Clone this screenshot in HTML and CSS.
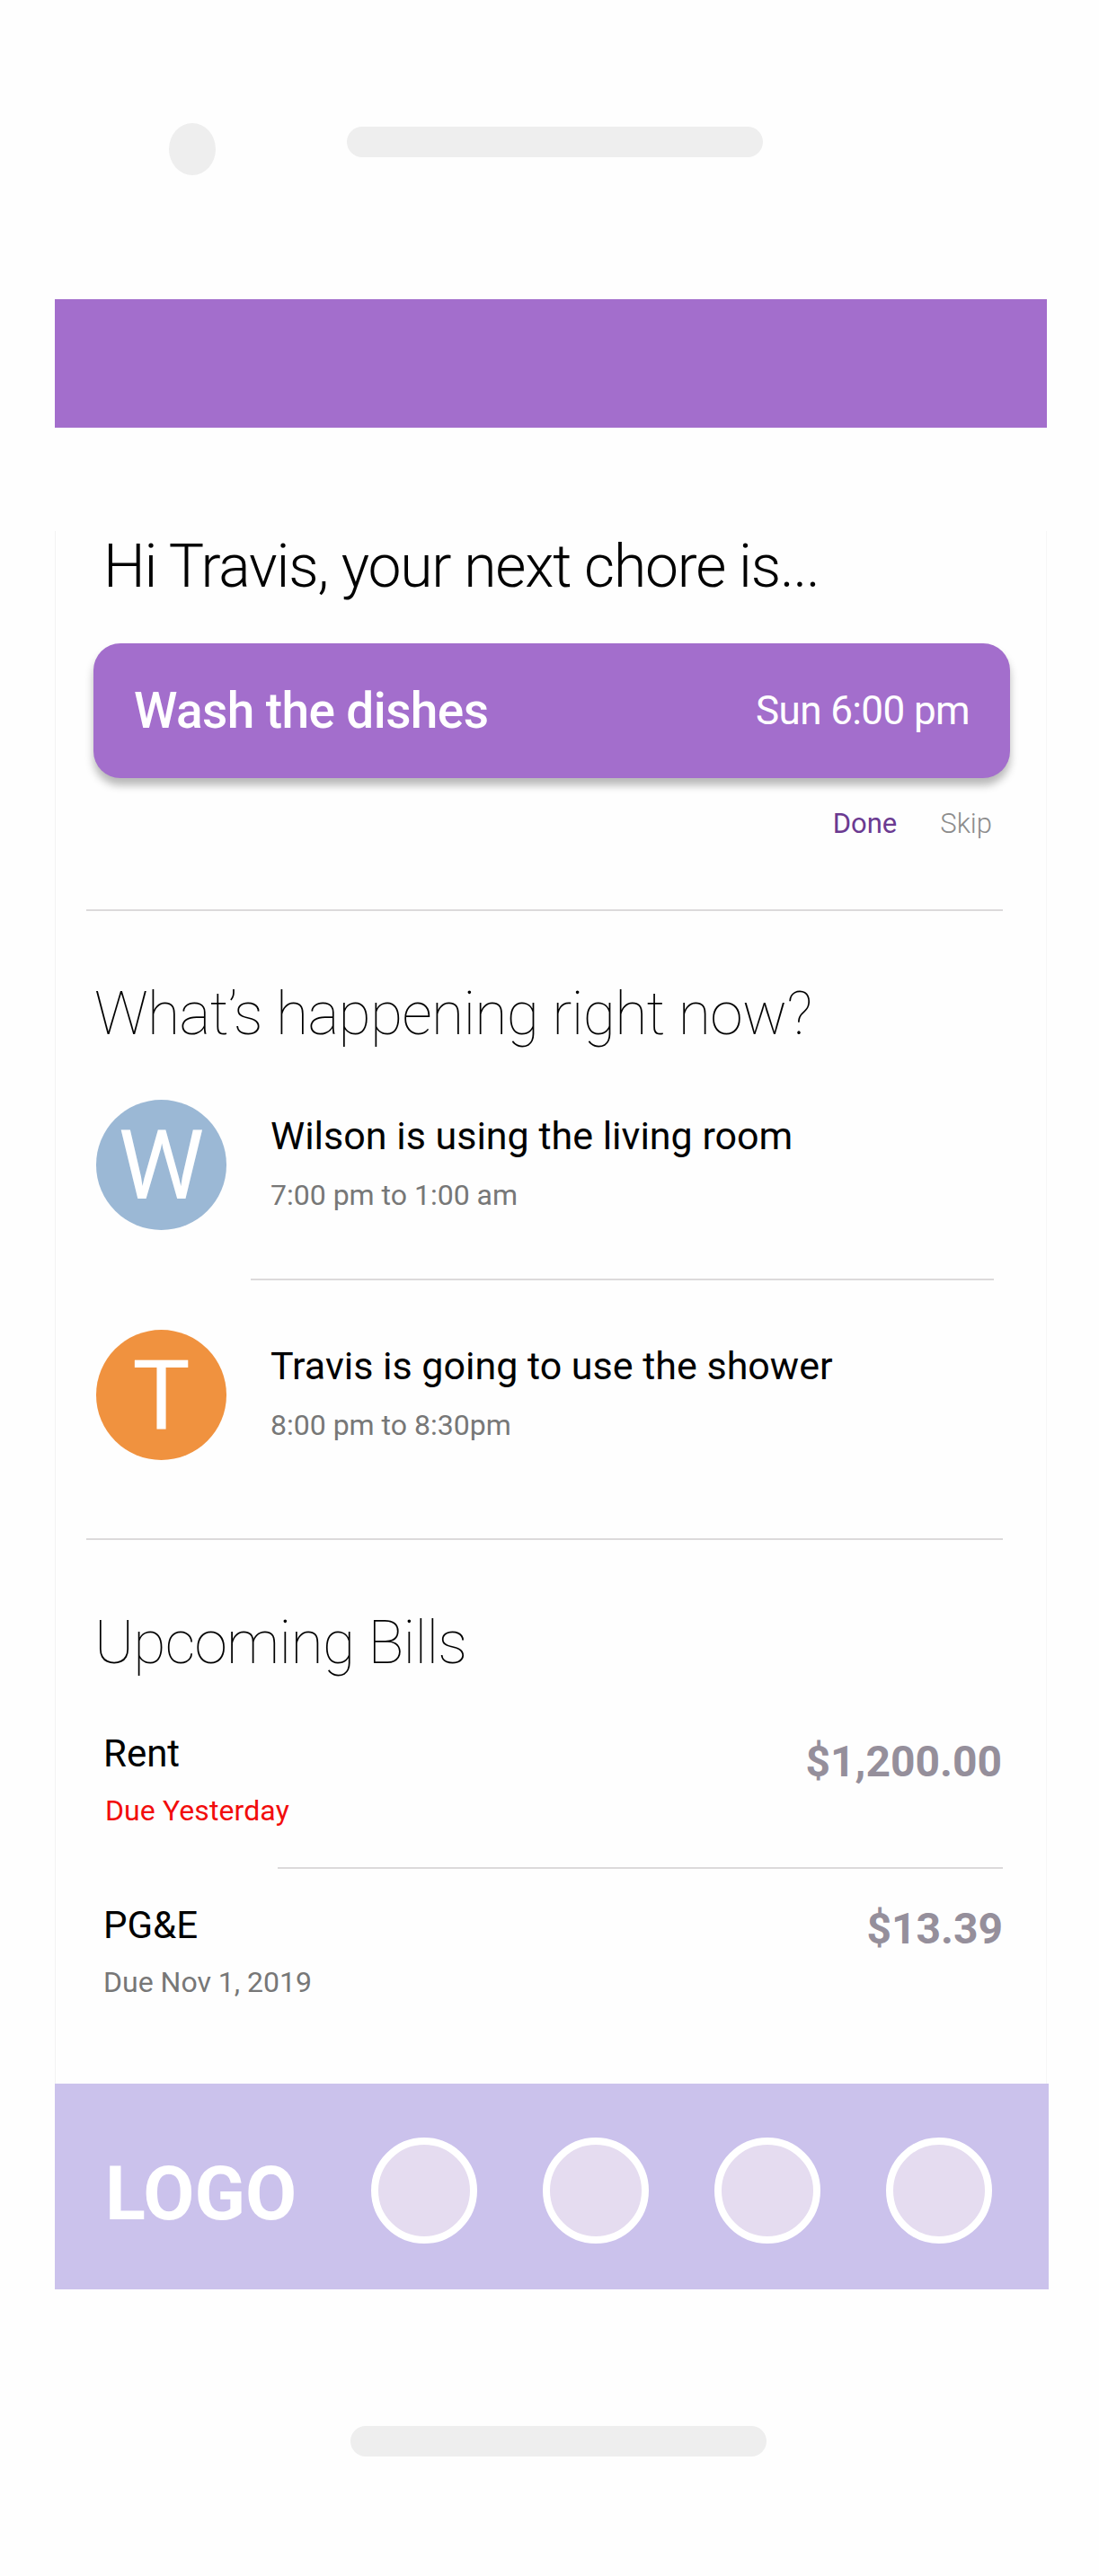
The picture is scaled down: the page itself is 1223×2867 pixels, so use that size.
FILE: index.html
```html
<!DOCTYPE html>
<html lang="en">
<head>
<meta charset="utf-8">
<title>Chores</title>
<link rel="stylesheet" href="styles.css">
</head>
<body>
<div class="device">
  <div class="device-top">
    <div class="camera"></div>
    <div class="speaker"></div>
  </div>

  <div class="screen">
    <header class="app-header"></header>

    <main class="content">
      <h1 class="greeting">Hi Travis, your next chore is...</h1>

      <div class="chore-card">
        <span class="chore-name">Wash the dishes</span>
        <span class="chore-time">Sun 6:00 pm</span>
      </div>
      <div class="chore-actions">
        <span class="action-done">Done</span>
        <span class="action-skip">Skip</span>
      </div>

      <hr class="divider">

      <h2 class="section-title">What’s happening right now?</h2>

      <div class="activity">
        <div class="avatar avatar-blue">W</div>
        <div class="activity-text">
          <div class="activity-title">Wilson is using the living room</div>
          <div class="activity-time">7:00 pm to 1:00 am</div>
        </div>
      </div>
      <hr class="divider-inset">
      <div class="activity">
        <div class="avatar avatar-orange">T</div>
        <div class="activity-text">
          <div class="activity-title">Travis is going to use the shower</div>
          <div class="activity-time">8:00 pm to 8:30pm</div>
        </div>
      </div>

      <hr class="divider divider-second">

      <h2 class="section-title section-bills">Upcoming Bills</h2>

      <div class="bill">
        <div class="bill-info">
          <div class="bill-name">Rent</div>
          <div class="bill-due bill-overdue">Due Yesterday</div>
        </div>
        <div class="bill-amount bill-amount-first">$1,200.00</div>
      </div>
      <hr class="divider-bill">
      <div class="bill">
        <div class="bill-info">
          <div class="bill-name">PG&amp;E</div>
          <div class="bill-due">Due Nov 1, 2019</div>
        </div>
        <div class="bill-amount">$13.39</div>
      </div>
    </main>

    <nav class="nav">
      <div class="logo">LOGO</div>
      <div class="nav-items">
        <span class="nav-dot"></span>
        <span class="nav-dot"></span>
        <span class="nav-dot"></span>
        <span class="nav-dot"></span>
      </div>
    </nav>
  </div>

  <div class="device-bottom">
    <div class="home-bar"></div>
  </div>
</div>
</body>
</html>
```

FILE: styles.css
```css
* {
  box-sizing: border-box;
}

html, body {
  margin: 0;
  padding: 0;
  background: #fefefe;
}

body {
  font-family: Roboto, "Liberation Sans", Arial, sans-serif;
  color: #000;
  width: 1223px;
}

.device-top {
  height: 333px;
  display: flex;
  align-items: flex-start;
  padding-left: 188px;
  padding-top: 137px;
}

.camera {
  width: 52px;
  height: 58px;
  border-radius: 50%;
  background: #eeeeee;
}

.speaker {
  width: 463px;
  height: 34px;
  margin-left: 146px;
  margin-top: 4px;
  border-radius: 17px;
  background: #eeeeee;
}

.screen {
  margin-left: 61px;
  width: 1104px;
}

.app-header {
  height: 143px;
  background: #a36ecc;
}

.content {
  border-left: 1px solid #f3f3f3;
  border-right: 1px solid #f6f6f6;
  padding-bottom: 93px;
}

.greeting {
  margin: 115px 0 0 0;
  padding-left: 53px;
  font-size: 66px;
  font-weight: 300;
  line-height: 80px;
  letter-spacing: -1.2px;
}

.chore-card {
  margin: 45px 40px 0 42px;
  height: 150px;
  border-radius: 30px;
  background: #a36ecc;
  box-shadow: 0 8px 10px rgba(0, 0, 0, 0.28);
  display: flex;
  align-items: center;
  justify-content: space-between;
  padding: 0 45px;
  color: #fff;
}

.chore-name {
  font-size: 55px;
  font-weight: 500;
  line-height: 64px;
  letter-spacing: -0.6px;
}

.chore-time {
  font-size: 44px;
  font-weight: 400;
  line-height: 56px;
  letter-spacing: -0.6px;
}

.chore-actions {
  margin-top: 31px;
  display: flex;
  justify-content: flex-end;
  gap: 48px;
  padding-right: 60px;
  font-size: 31px;
  line-height: 40px;
}

.action-done {
  color: #6b3a91;
}

.action-skip {
  color: #8c8c8c;
  font-weight: 300;
}

.divider {
  margin: 75px 48px 0 34px;
  border: 0;
  height: 2px;
  background: #dcdadb;
}

.section-title {
  margin: 75px 0 0 0;
  padding-left: 43px;
  font-size: 66px;
  font-weight: 100;
  line-height: 80px;
  letter-spacing: -0.7px;
}

.activity {
  display: flex;
  align-items: flex-start;
  margin-left: 45px;
}

.section-title + .activity {
  margin-top: 55px;
}

.avatar {
  flex: none;
  width: 145px;
  height: 145px;
  border-radius: 50%;
  color: #fff;
  display: flex;
  align-items: center;
  justify-content: center;
  font-size: 108px;
  font-weight: 400;
  line-height: 1;
}

.avatar-blue {
  background: #9bb8d5;
}

.avatar-orange {
  background: #f0923f;
}

.activity-text {
  padding-top: 14px;
  margin-left: 49px;
}

.activity-title {
  font-size: 43px;
  line-height: 52px;
}

.activity-time {
  margin-top: 20px;
  font-size: 32px;
  line-height: 40px;
  color: #777777;
}

.divider-inset {
  margin: 54px 58px 55px 217px;
  border: 0;
  height: 2px;
  background: #dcdadb;
}

.divider-second {
  margin-top: 87px;
}

.bill {
  display: flex;
  justify-content: space-between;
  align-items: flex-start;
  padding-left: 53px;
  padding-right: 48px;
}

.section-bills + .bill {
  margin-top: 58px;
}

.bill-name {
  font-size: 42px;
  line-height: 50px;
}

.bill-due {
  margin-top: 18px;
  font-size: 32px;
  line-height: 40px;
  color: #777777;
}

.bill-overdue {
  color: #f20c0c;
  padding-left: 2px;
  letter-spacing: 0.1px;
}

.bill-amount {
  padding-top: 1px;
  font-size: 48px;
  font-weight: 700;
  line-height: 56px;
  color: #958f9b;
}

.bill-amount-first {
  padding-top: 6px;
  padding-right: 1px;
}

.divider-bill {
  margin: 43px 48px 38px 247px;
  border: 0;
  height: 2px;
  background: #dcdadb;
}

.nav {
  height: 229px;
  width: 1106px;
  background: #cbc2ec;
  display: flex;
  align-items: flex-start;
  padding-top: 60px;
  padding-left: 56px;
}

.logo {
  flex: none;
  width: 296px;
  margin-top: 21px;
  font-size: 83px;
  font-weight: 700;
  line-height: 83px;
  color: #fff;
}

.nav-items {
  display: flex;
  gap: 73px;
}

.nav-dot {
  display: block;
  width: 118px;
  height: 118px;
  border-radius: 50%;
  border: 8px solid #ffffff;
  background: #e5dcf0;
}

.device-bottom {
  height: 319px;
  padding-top: 152px;
  padding-left: 390px;
}

.home-bar {
  width: 463px;
  height: 34px;
  border-radius: 17px;
  background: #eeeeee;
}
```
